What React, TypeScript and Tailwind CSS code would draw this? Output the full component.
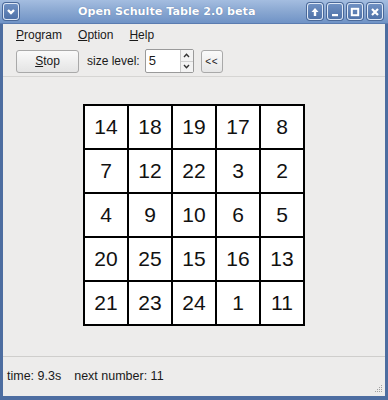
import React from "react";

const grid = [
  [14, 18, 19, 17, 8],
  [7, 12, 22, 3, 2],
  [4, 9, 10, 6, 5],
  [20, 25, 15, 16, 13],
  [21, 23, 24, 1, 11],
];

function TBtn({ children }: { children: React.ReactNode }) {
  return (
    <div className="w-[16px] h-[17px] rounded-[3px] border border-[#dfe8f5] bg-gradient-to-b from-[#6f90c2] to-[#4f72a8] flex items-center justify-center shadow-[0_0_0_1px_#4a6898]">
      {children}
    </div>
  );
}

export default function App() {
  const font = { fontFamily: '"Liberation Sans", Arial, sans-serif' };
  return (
    <div className="w-[388px] h-[400px] flex flex-col bg-[#4d6da0] overflow-hidden" style={font}>
      {/* title bar */}
      <div className="h-[24px] bg-gradient-to-b from-[#a4bde0] via-[#89a7d1] to-[#7093c6] flex items-center justify-between px-[3px] relative border-b border-[#5b7cb0]">
        <TBtn>
          <svg width="10" height="8" viewBox="0 0 10 8">
            <path d="M2 2 L5 5 L8 2" stroke="white" strokeWidth="2.4" fill="none" />
          </svg>
        </TBtn>
        <div
          className="absolute left-[78px] top-0 h-[24px] flex items-center text-white font-bold text-[11.2px] whitespace-nowrap [text-shadow:0_0_1px_#4d6da0]"
          style={{ fontFamily: '"DejaVu Sans", sans-serif' }}
        >
          Open Schulte Table 2.0 beta
        </div>
        <div className="flex gap-[4px] mr-[2px]">
          <TBtn>
            <svg width="10" height="10" viewBox="0 0 10 10">
              <path d="M5 1 L1.5 5 H3.8 V9 H6.2 V5 H8.5 Z" fill="white" />
            </svg>
          </TBtn>
          <TBtn>
            <svg width="10" height="10" viewBox="0 0 10 10">
              <rect x="2" y="7" width="6" height="2.2" fill="white" />
            </svg>
          </TBtn>
          <TBtn>
            <svg width="10" height="10" viewBox="0 0 10 10">
              <rect x="1.8" y="1.8" width="6.4" height="6.4" stroke="white" strokeWidth="2" fill="none" />
            </svg>
          </TBtn>
          <TBtn>
            <svg width="10" height="10" viewBox="0 0 10 10">
              <path d="M2 2 L8 8 M8 2 L2 8" stroke="white" strokeWidth="2.2" />
            </svg>
          </TBtn>
        </div>
      </div>

      {/* body */}
      <div className="flex-1 mx-[3px] mb-[4px] bg-[#edeceb] flex flex-col text-[#1a1a1a]">
        {/* menu */}
        <div className="h-[22px] flex items-center text-[12px] pl-[13px]">
          <span><span className="underline">P</span>rogram</span>
          <span className="ml-[16px]"><span className="underline">O</span>ption</span>
          <span className="ml-[16px]"><span className="underline">H</span>elp</span>
        </div>
        {/* toolbar */}
        <div className="h-[31px] flex items-center pl-[13px] border-b border-[#d6d5d3]">
          <div className="w-[63px] h-[23px] rounded-[3px] border border-[#a9a9a9] bg-gradient-to-b from-[#fafafa] to-[#e4e4e4] flex items-center justify-center text-[12px]">
            <span><span className="underline">S</span>top</span>
          </div>
          <span className="ml-[8px] text-[12px]">size level:</span>
          <div className="ml-[5px] w-[49px] h-[24px] border border-[#9a9a9a] rounded-[2px] bg-white flex">
            <div className="flex-1 pl-[3px] text-[13px] flex items-center">5</div>
            <div className="w-[13px] border-l border-[#c8c8c8] bg-[#f3f3f3] flex flex-col">
              <div className="flex-1 flex items-center justify-center border-b border-[#d0d0d0]">
                <svg width="7" height="5" viewBox="0 0 7 5"><path d="M1 4 L3.5 1.3 L6 4" stroke="#333" strokeWidth="1.4" fill="none" /></svg>
              </div>
              <div className="flex-1 flex items-center justify-center">
                <svg width="7" height="5" viewBox="0 0 7 5"><path d="M1 1 L3.5 3.7 L6 1" stroke="#333" strokeWidth="1.4" fill="none" /></svg>
              </div>
            </div>
          </div>
          <div className="ml-[7px] w-[22px] h-[23px] rounded-[3px] border border-[#a9a9a9] bg-gradient-to-b from-[#fafafa] to-[#e6e6e6] flex items-center justify-center text-[10px] tracking-[0.5px]">
            &lt;&lt;
          </div>
        </div>
        {/* grid area */}
        <div className="flex-1 flex justify-center pt-[27px] border-b border-[#cfcecc]">
          <div className="self-start grid grid-cols-5 w-[222px] border-l-2 border-t-2 border-black bg-white">
            {grid.flat().map((n, i) => (
              <div key={i} className="h-[44px] border-r-2 border-b-2 border-black flex items-center justify-center text-[21px] text-[#111]">
                {n}
              </div>
            ))}
          </div>
        </div>
        {/* status */}
        <div className="h-[39px] flex items-center pl-[4px] text-[12.5px] relative">
          <span>time: 9.3s</span>
          <span className="ml-[13px]">next number: 11</span>
          <div className="absolute right-[2px] bottom-[3px] w-[8px] h-[8px] grid grid-cols-4 gap-[0px]">
            {[0,0,0,1, 0,0,1,1, 0,1,1,1, 1,1,1,1].map((v, i) => (
              <div key={i} className={v ? "w-[1px] h-[1px] bg-[#a0a0a0]" : "w-[1px] h-[1px]"} />
            ))}
          </div>
        </div>
      </div>
    </div>
  );
}
